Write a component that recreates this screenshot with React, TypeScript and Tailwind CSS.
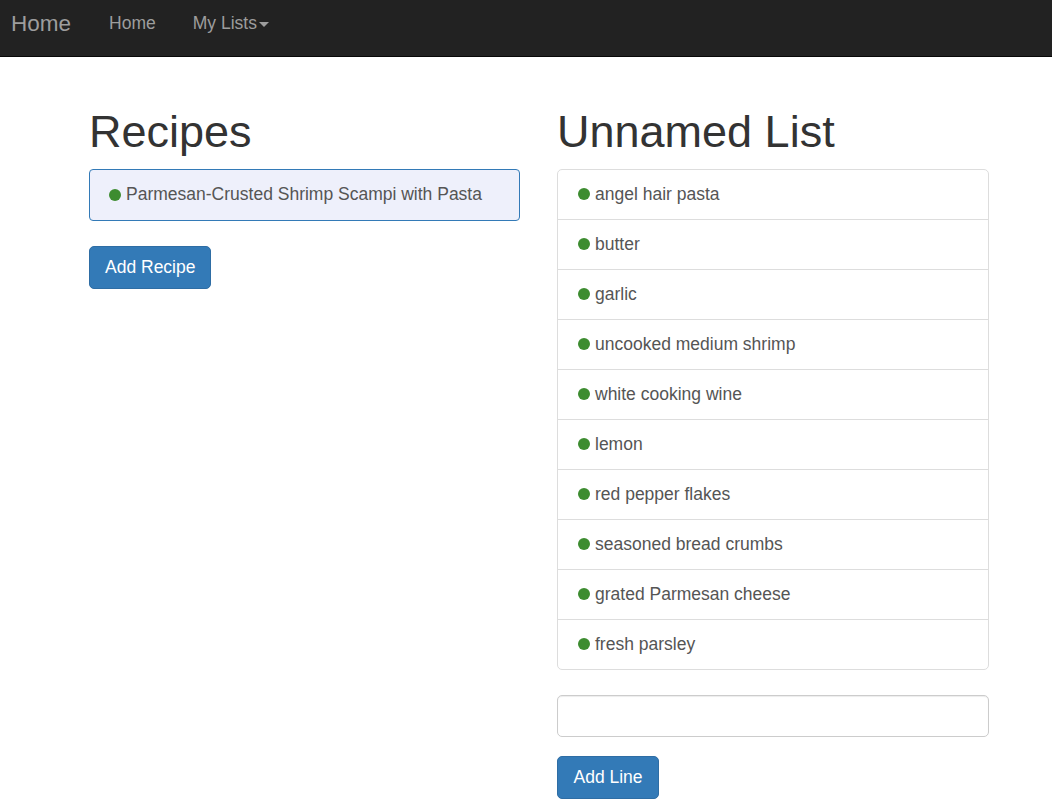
import React, { useState } from 'react';

const ingredients = [
  'angel hair pasta',
  'butter',
  'garlic',
  'uncooked medium shrimp',
  'white cooking wine',
  'lemon',
  'red pepper flakes',
  'seasoned bread crumbs',
  'grated Parmesan cheese',
  'fresh parsley',
];

function Dot() {
  return <span className="mr-[5px] inline-block h-[12px] w-[12px] shrink-0 rounded-full bg-[#3d8c30]" />;
}

export default function App() {
  const [line, setLine] = useState('');

  return (
    <div className="min-h-screen bg-white font-['Liberation_Sans',Arial,sans-serif] text-[17.5px] text-[#333]">
      {/* Navbar */}
      <nav className="flex h-[57px] items-center border-b border-[#080808] bg-[#222] pb-[9px]">
        <a className="ml-[11px] text-[22.5px] text-[#9d9d9d]">Home</a>
        <a className="ml-[38px] text-[17.5px] text-[#9d9d9d]">Home</a>
        <a className="ml-[37px] flex items-center text-[17.5px] text-[#9d9d9d]">
          My Lists
          <span className="ml-[2px] mt-[2px] inline-block h-0 w-0 border-x-[5px] border-t-[5px] border-x-transparent border-t-[#9d9d9d]" />
        </a>
      </nav>

      <div className="flex gap-[37px] pl-[89px] pt-[50px]">
        {/* Recipes column */}
        <div className="w-[431px]">
          <h1 className="mb-[12px] text-[45px] leading-[49.5px] font-normal">Recipes</h1>
          <div className="flex h-[52px] items-center rounded-[4px] border border-[#337ab7] bg-[#eef0fb] pl-[19px] text-[#555]">
            <Dot />
            Parmesan-Crusted Shrimp Scampi with Pasta
          </div>
          <button
            type="button"
            className="mt-[25px] h-[43px] rounded-[5px] border border-[#2e6da4] bg-[#337ab7] px-[15px] text-[17.5px] text-white"
          >
            Add Recipe
          </button>
        </div>

        {/* List column */}
        <div className="w-[432px]">
          <h1 className="mb-[12px] text-[45px] leading-[49.5px] font-normal">Unnamed List</h1>
          <ul className="overflow-hidden rounded-[5px] border border-[#ddd]">
            {ingredients.map((item, i) => (
              <li
                key={item}
                className={`flex h-[49px] items-center pl-[20px] text-[#555] ${i > 0 ? 'box-content border-t border-[#ddd]' : ''}`}
              >
                <Dot />
                {item}
              </li>
            ))}
          </ul>
          <input
            value={line}
            onChange={(e) => setLine(e.target.value)}
            className="mt-[25px] block h-[42px] w-full rounded-[5px] border border-[#ccc] px-3 shadow-[inset_0_1px_1px_rgba(0,0,0,0.075)] outline-none"
          />
          <button
            type="button"
            className="mt-[19px] h-[43px] rounded-[5px] border border-[#2e6da4] bg-[#337ab7] px-[15.5px] text-[17.5px] text-white"
          >
            Add Line
          </button>
        </div>
      </div>
    </div>
  );
}
